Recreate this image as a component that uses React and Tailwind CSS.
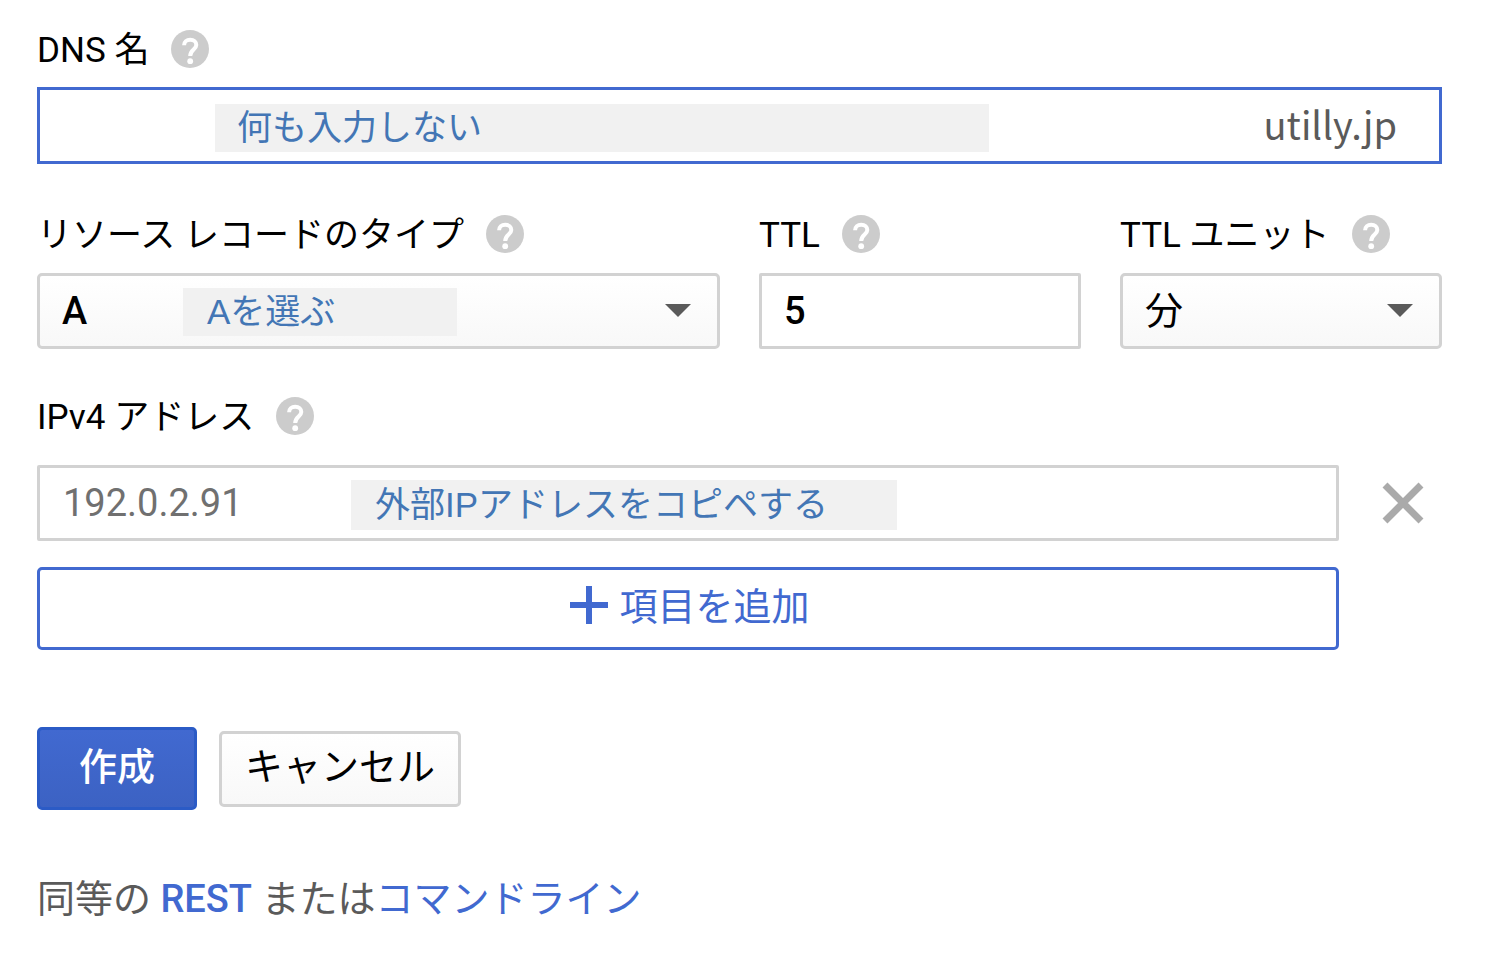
import React from "react";

function HelpButton({ topic }) {
  return (
    <button type="button" aria-label={`${topic} ヘルプ`} className="shrink-0">
      <svg viewBox="0 0 38 38" className="block size-[38px]" aria-hidden="true">
        <circle cx="19" cy="19" r="19" fill="#cccccc" />
        <path
          d="M13.1 15.2C13.1 11.8 15.6 9.8 19.2 9.8C22.9 9.8 25.3 12 25.3 15C25.3 19.6 19.2 19.6 19.2 26"
          fill="none"
          stroke="#ffffff"
          strokeWidth="4"
        />
        <circle cx="19.2" cy="31.2" r="2.9" fill="#ffffff" />
      </svg>
    </button>
  );
}

function FieldLabel({ htmlFor, children }) {
  return (
    <div className="flex h-[38px] items-center gap-[22px] text-[35px] leading-[38px] whitespace-nowrap">
      <label htmlFor={htmlFor} className="pt-[3px]">{children}</label>
      <HelpButton topic={children} />
    </div>
  );
}

function Note({ className, children }) {
  return (
    <div
      className={`pointer-events-none absolute flex items-center bg-[#f1f1f1] font-['Liberation_Sans','Noto_Sans_CJK_JP',sans-serif] text-[35px] leading-[44px] whitespace-nowrap text-[#4376b5] ${className}`}
    >
      {children}
    </div>
  );
}

function SelectBox({ id, options, className, children }) {
  return (
    <div className="relative">
      <select
        id={id}
        className={`block h-[76px] w-full appearance-none rounded-[5px] border-[3px] border-[#d2d2d2] bg-linear-to-b from-white to-[#f8f8f8] px-[22px] text-[38px] leading-[56px] outline-none ${className}`}
      >
        {options.map((option) => (
          <option key={option}>{option}</option>
        ))}
      </select>
      <svg
        viewBox="0 0 26 13"
        className="pointer-events-none absolute top-[31px] right-[29px] h-[13px] w-[26px]"
        aria-hidden="true"
      >
        <path d="M0 0H26L13 13Z" fill="#5a5a5a" />
      </svg>
      {children}
    </div>
  );
}

export default function App() {
  return (
    <form
      className="pt-[30px] pr-[62px] pb-12 pl-[37px] font-[Roboto,'Noto_Sans_CJK_JP',sans-serif] text-black"
      onSubmit={(event) => event.preventDefault()}
    >
      <FieldLabel htmlFor="dns-name">DNS 名</FieldLabel>
      <div className="relative mt-[19px] flex h-[77px] items-center border-[3px] border-[#4169d0] pr-[42px] pl-[23px]">
        <input id="dns-name" type="text" className="min-w-0 flex-1 text-[38px] outline-none" />
        <span className="pb-[3px] font-['Noto_Sans_CJK_JP',sans-serif] text-[38px] leading-[56px] text-[#5a5a5a]">utilly.jp</span>
        <Note className="top-[14px] left-[175px] h-[48px] w-[774px] px-[22px]">何も入力しない</Note>
      </div>

      <div className="mt-[51px] grid grid-cols-[683fr_322fr_322fr] gap-x-[39px]">
        <div className="flex flex-col gap-5">
          <FieldLabel htmlFor="record-type">リソース レコードのタイプ</FieldLabel>
          <SelectBox id="record-type" className="font-medium" options={["A", "AAAA", "CNAME", "MX", "TXT"]}>
            <Note className="top-[15px] left-[146px] h-[48px] w-[274px] px-6">Aを選ぶ</Note>
          </SelectBox>
        </div>
        <div className="flex flex-col gap-5">
          <FieldLabel htmlFor="ttl">TTL</FieldLabel>
          <input
            id="ttl"
            type="text"
            defaultValue="5"
            className="h-[76px] w-full rounded-[2px] border-[3px] border-[#d2d2d2] px-[22px] text-[38px] font-medium outline-none"
          />
        </div>
        <div className="flex flex-col gap-5">
          <FieldLabel htmlFor="ttl-unit">TTL ユニット</FieldLabel>
          <SelectBox id="ttl-unit" className="font-normal" options={["分", "秒", "時間", "日"]} />
        </div>
      </div>

      <div className="mt-12">
        <FieldLabel htmlFor="ipv4">IPv4 アドレス</FieldLabel>
      </div>
      <div className="mt-[30px] flex items-center gap-[43px] pr-[18px]">
        <div className="relative flex-1">
          <input
            id="ipv4"
            type="text"
            placeholder="192.0.2.91"
            className="block h-[76px] w-full rounded-[2px] border-[3px] border-[#d2d2d2] px-[23px] text-[38px] outline-none placeholder:text-[#707070]"
          />
          <Note className="top-[15px] left-[314px] h-[50px] w-[546px] px-6">外部IPアドレスをコピペする</Note>
        </div>
        <button type="button" aria-label="項目を削除">
          <svg viewBox="0 0 42 42" className="block size-[42px]" aria-hidden="true">
            <path d="M3 3L39 39M39 3L3 39" stroke="#aaaaaa" strokeWidth="7" />
          </svg>
        </button>
      </div>
      <div className="mt-[26px] pr-[103px]">
        <button
          type="button"
          className="flex h-[83px] w-full items-center justify-center gap-[11px] rounded-[5px] border-[3px] border-[#4169d0] pb-1 pl-1 text-[38px] leading-[56px] text-[#4169d0]"
        >
          <svg viewBox="0 0 38 42" className="h-[42px] w-[38px]" aria-hidden="true">
            <path d="M19 0V38M0 19H38" stroke="#4169d0" strokeWidth="6" />
          </svg>
          項目を追加
        </button>
      </div>

      <div className="mt-[77px] flex items-center gap-[22px] text-[38px] leading-[56px]">
        <button
          type="submit"
          className="h-[83px] rounded-[5px] border-[3px] border-[#2b5bc6] bg-linear-to-b from-[#4169d0] to-[#3c62c3] px-[39px] pb-1 font-medium text-white"
        >
          作成
        </button>
        <button
          type="button"
          className="h-[76px] rounded-[5px] border-[3px] border-[#d2d2d2] bg-linear-to-b from-white to-[#f8f8f8] px-[23px] pb-1"
        >
          キャンセル
        </button>
      </div>

      <p className="mt-[61px] text-[38px] leading-[56px] text-[#5a5a5a]">
        同等の{" "}
        <a href="#rest" className="font-medium text-[#4169d0]">REST</a>{" "}
        または
        <a href="#cli" className="text-[#4169d0]">コマンドライン</a>
      </p>
    </form>
  );
}
